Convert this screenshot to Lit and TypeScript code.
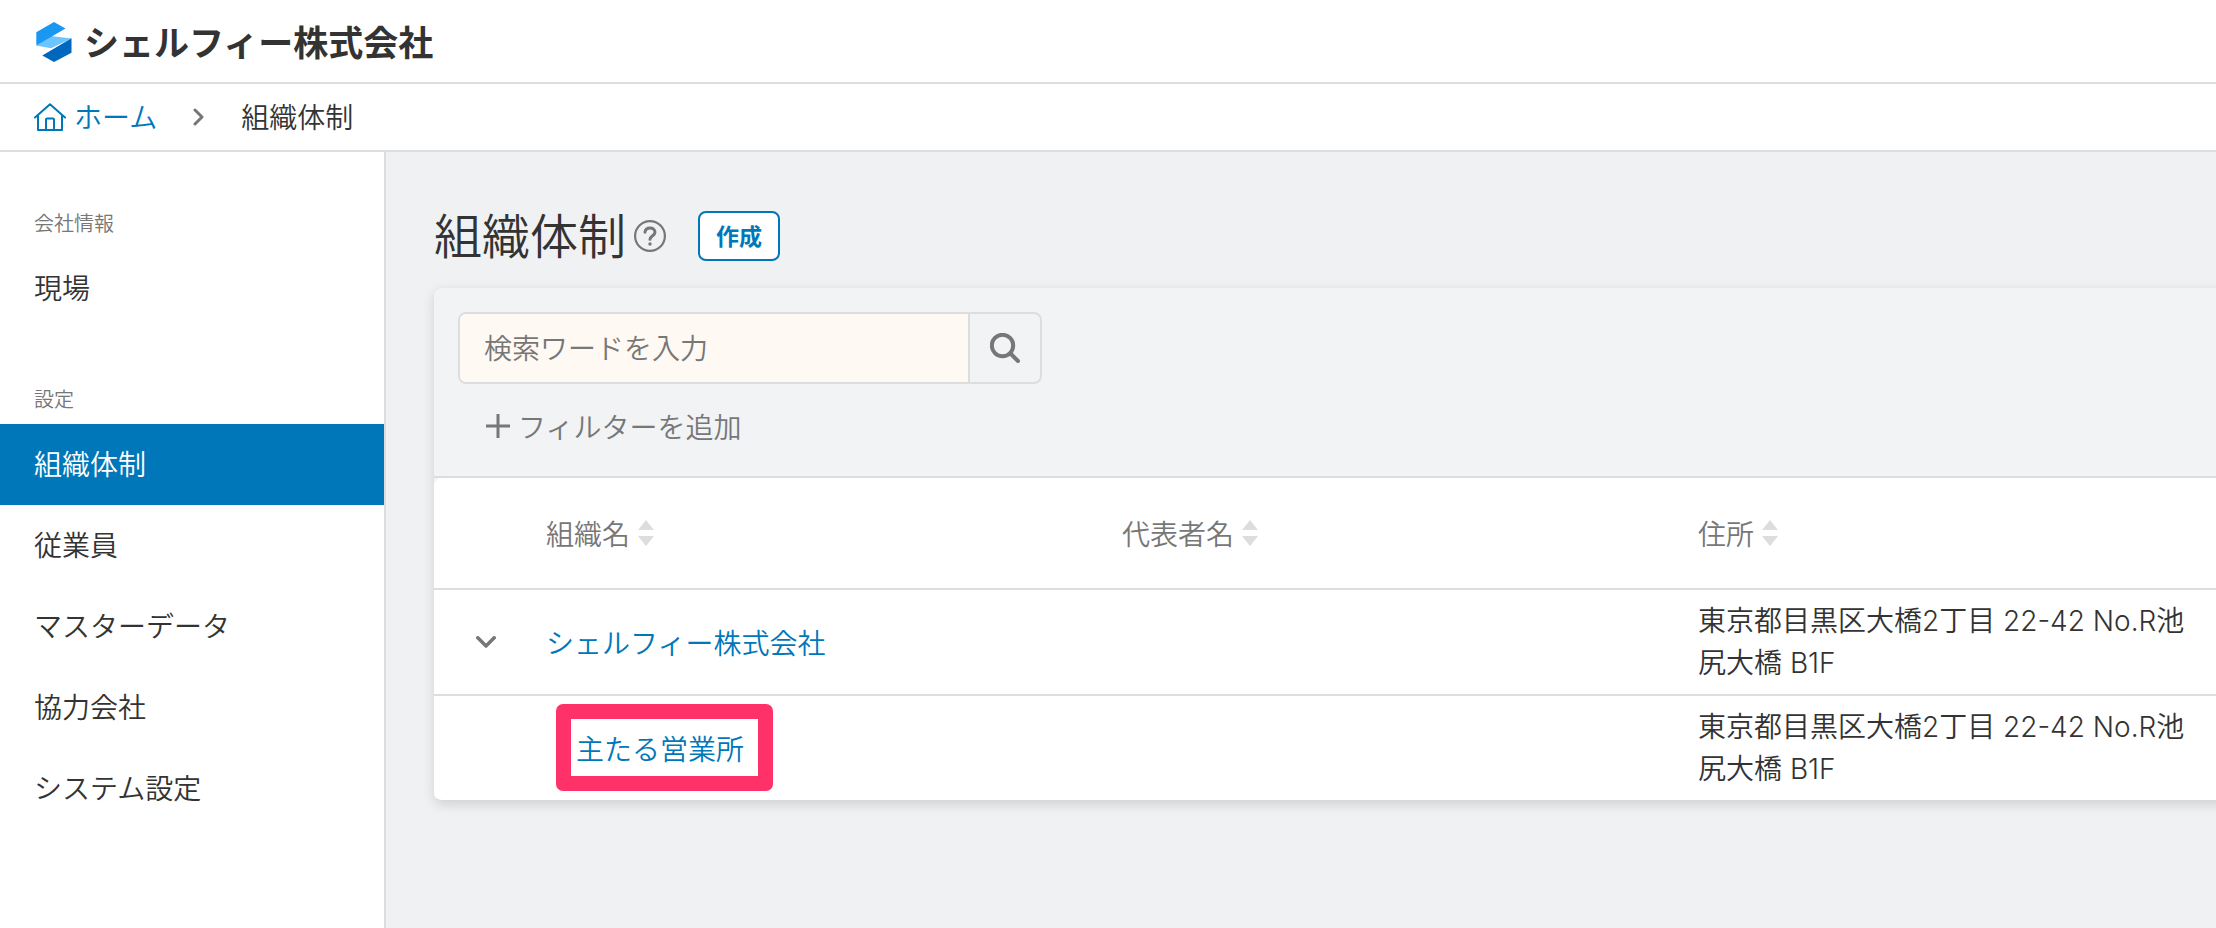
import { LitElement, html, css, svg } from "lit";
import { customElement, property, state } from "lit/decorators.js";
import { classMap } from "lit/directives/class-map.js";

interface Organization {
  name: string;
  representative: string;
  address: string;
  children?: Organization[];
}

const logo = svg`<svg width="36" height="40" viewBox="0 0 36 40" aria-hidden="true">
  <path fill="#6cc5ff" d="M.3 23.500 15 14l20.500 2.500L15 26.200z"/>
  <path fill="#1a97f3" d="M18 0l11.500 6.400L.3 23.500V10.300z"/>
  <path fill="#0067bf" d="M35.500 16.300v14.500L18 40 6.300 33.400z"/>
</svg>`;

const homeIcon = svg`<svg width="32" height="28" viewBox="0 0 32 28" fill="none" stroke="currentColor" stroke-width="2" stroke-linecap="round" stroke-linejoin="round" aria-hidden="true">
  <path d="M1 14.500 16 1.200 31 14.500M4 13v14h24V13M12 27V16.500q0-1 1-1h6q1 0 1 1V27"/>
</svg>`;

const chevronRight = svg`<svg width="12" height="18" viewBox="0 0 12 18" fill="none" stroke="#777" stroke-width="3" stroke-linecap="round" stroke-linejoin="round" aria-hidden="true"><path d="M2 2l7 7-7 7"/></svg>`;

const chevronDown = svg`<svg width="20" height="12" viewBox="0 0 20 12" fill="none" stroke="currentColor" stroke-width="3.500" stroke-linecap="round" stroke-linejoin="round" aria-hidden="true"><path d="M1.800 1.800 10 10l8.200-8.200"/></svg>`;

const helpIcon = svg`<svg width="32" height="32" viewBox="0 0 32 32" fill="none" stroke="currentColor" aria-hidden="true">
  <circle cx="16" cy="16" r="14.900" stroke-width="2.200"/>
  <path d="M11 12.200c.3-2.700 2.300-4.200 5-4.200s5 1.600 5 4.300c0 3.300-4.700 3.600-5 7" stroke-width="3" stroke-linecap="round"/>
  <circle cx="16" cy="24" r="1.700" fill="currentColor" stroke="none"/>
</svg>`;

const searchIcon = svg`<svg width="30" height="30" viewBox="0 0 30 30" fill="none" stroke="currentColor" stroke-width="4" stroke-linecap="round" aria-hidden="true"><circle cx="12.500" cy="12.500" r="10.700"/><path d="M20.500 20.500 28 28"/></svg>`;

const plusIcon = svg`<svg width="24" height="24" viewBox="0 0 24 24" stroke="currentColor" stroke-width="3" aria-hidden="true"><path d="M12 0v24M0 12h24"/></svg>`;

const sortIcon = svg`<svg width="16" height="26" viewBox="0 0 16 26" fill="#ddd" aria-hidden="true"><path d="M8 0l8 10H0zM8 26l8-10H0z"/></svg>`;

const reset = css`
  :host, * { box-sizing: border-box; }
  a { color: inherit; text-decoration: none; }
  button, input { font: inherit; color: inherit; margin: 0; }
  button { cursor: pointer; background: none; border: 0; padding: 0; }
  svg { display: block; flex: none; }
`;

@customElement("site-header")
class SiteHeader extends LitElement {
  static styles = [reset, css`
    :host { display: block; background: #fff; }
    .brand { display: flex; align-items: center; gap: 12px; height: 84px; padding: 2px 36px 0; border-bottom: 2px solid #ddd; font-size: 35px; font-weight: 700; line-height: 52px; }
    .crumbs { display: flex; align-items: center; gap: 36px; height: 68px; padding: 0 34px; border-bottom: 2px solid #ddd; font-size: 28px; line-height: 42px; }
    .label { padding-bottom: 2px; }
    .home { display: flex; align-items: center; gap: 8px; color: #0077b9; }
  `];

  render() {
    return html`
      <header class="brand">${logo}<span class="label">シェルフィー株式会社</span></header>
      <nav class="crumbs" aria-label="パンくず">
        <a class="home" href="#home">${homeIcon}<span class="label">ホーム</span></a>
        ${chevronRight}
        <span class="label" aria-current="page">組織体制</span>
      </nav>`;
  }
}

@customElement("side-nav")
class SideNav extends LitElement {
  @property() current = "";

  private sections = [
    { title: "会社情報", items: ["現場"] },
    { title: "設定", items: ["組織体制", "従業員", "マスターデータ", "協力会社", "システム設定"] },
  ];

  static styles = [reset, css`
    :host { display: block; background: #fff; border-right: 2px solid #ddd; }
    .nav { display: flex; flex-direction: column; gap: 47px; padding-top: 48px; }
    .title { margin: 0; padding: 0 0 2px 34px; font-size: 20px; font-weight: inherit; line-height: 46px; color: #777; }
    .item { display: block; padding: 0 0 3px 34px; font-size: 28px; line-height: 78px; }
    .active { background: #0077b9; color: #fff; }
  `];

  render() {
    return html`<nav class="nav">
      ${this.sections.map((s) => html`<section>
        <h2 class="title">${s.title}</h2>
        ${s.items.map((i) => html`<a href="#${i}" class=${classMap({ item: true, active: i === this.current })}>${i}</a>`)}
      </section>`)}
    </nav>`;
  }
}

@customElement("organization-list")
class OrganizationList extends LitElement {
  @state() private expanded = true;

  private organizations: Organization[] = [
    {
      name: "シェルフィー株式会社",
      representative: "",
      address: "東京都目黒区大橋2丁目 22-42 No.R池尻大橋 B1F",
      children: [
        { name: "主たる営業所", representative: "", address: "東京都目黒区大橋2丁目 22-42 No.R池尻大橋 B1F" },
      ],
    },
  ];

  static styles = [reset, css`
    :host { display: block; margin-right: -30px; border-radius: 8px; background: #f1f3f5; box-shadow: 0 3px 12px rgba(0, 0, 0, 0.13); font-size: 28px; line-height: 42px; }
    .filters { display: flex; flex-direction: column; align-items: flex-start; gap: 21px; padding: 24px 24px 29px; border-bottom: 2px solid #ddd; color: #777; }
    .search { display: flex; width: 584px; max-width: 100%; height: 72px; border: 2px solid #ddd; border-radius: 8px; overflow: hidden; }
    .word { flex: 1; min-width: 0; padding: 0 24px 2px; border: 0; border-right: 2px solid #ddd; background: #fff9f3; outline: none; }
    .word::placeholder { color: #777; opacity: 1; }
    .submit { display: grid; place-items: center; width: 70px; }
    .add { display: flex; align-items: center; gap: 8px; margin-left: 28px; }
    .table { width: 100%; table-layout: fixed; border-collapse: separate; border-spacing: 0; background: #fff; border-radius: 8px; }
    .toggle-col { width: 84px; }
    th, td { padding: 10px 48px 10px 28px; border-bottom: 2px solid #ddd; text-align: left; }
    th { height: 112px; font-weight: inherit; color: #777; }
    tr:last-child td { border-bottom-color: #d9dadb; }
    tr:last-child td:first-child { border-bottom-left-radius: 8px; }
    .sort { display: flex; align-items: center; gap: 8px; }
    .toggle-cell { padding: 0 0 0 42px; }
    .toggle { display: block; color: #777; }
    .link { color: #0077b9; }
    .child { position: relative; display: inline-block; margin-left: 30px; }
    .child::after { content: ""; position: absolute; inset: -23px -29px -22px -20px; border: 15px solid #ff3169; border-radius: 7px; pointer-events: none; }
    .address { font-family: "Inter", "Noto Sans CJK JP", sans-serif; }
  `];

  private row(org: Organization, child: boolean) {
    return html`<tr>
      <td class="toggle-cell">
        ${org.children
          ? html`<button class="toggle" aria-label="下位組織の表示" aria-expanded=${this.expanded} @click=${() => (this.expanded = !this.expanded)}>${chevronDown}</button>`
          : ""}
      </td>
      <td><a href="#organization" class=${classMap({ link: true, child })}>${org.name}</a></td>
      <td>${org.representative}</td>
      <td class="address">${org.address}</td>
    </tr>
    ${this.expanded ? org.children?.map((c) => this.row(c, true)) : ""}`;
  }

  render() {
    return html`
      <div class="filters">
        <form class="search" role="search" @submit=${(e: Event) => e.preventDefault()}>
          <input class="word" type="text" aria-label="検索ワード" placeholder="検索ワードを入力" />
          <button class="submit" aria-label="検索">${searchIcon}</button>
        </form>
        <button class="add">${plusIcon}<span>フィルターを追加</span></button>
      </div>
      <table class="table">
        <colgroup><col class="toggle-col" /><col /><col /><col /></colgroup>
        <thead>
          <tr>
            <th></th>
            ${["組織名", "代表者名", "住所"].map((h) => html`<th scope="col"><button class="sort">${h}${sortIcon}</button></th>`)}
          </tr>
        </thead>
        <tbody>${this.organizations.map((o) => this.row(o, false))}</tbody>
      </table>`;
  }
}

@customElement("app-root")
class AppRoot extends LitElement {
  static styles = [reset, css`
    :host { display: flex; flex-direction: column; min-height: 100vh; background: #eff1f3; color: #333; font-family: "Noto Sans CJK JP", sans-serif; font-weight: 350; }
    .body { display: flex; flex: 1; }
    .side { flex: none; width: 386px; }
    .main { flex: 1; min-width: 0; overflow: hidden; padding: 48px 0 48px 48px; }
    .heading { display: flex; align-items: center; height: 72px; margin-bottom: 16px; }
    .title { margin: 0; padding-bottom: 6px; font-size: 48px; font-weight: inherit; line-height: 66px; }
    .help { margin-left: 8px; color: #777; }
    .create { height: 50px; margin-left: 32px; padding: 0 16px 2px; border: 2px solid #0077b9; border-radius: 8px; background: #fff; color: #0077b9; font-size: 23px; font-weight: 700; line-height: 44px; }
  `];

  render() {
    return html`
      <site-header></site-header>
      <div class="body">
        <side-nav class="side" current="組織体制"></side-nav>
        <main class="main">
          <div class="heading">
            <h1 class="title">組織体制</h1>
            <button class="help" aria-label="ヘルプ">${helpIcon}</button>
            <button class="create">作成</button>
          </div>
          <organization-list></organization-list>
        </main>
      </div>`;
  }
}
